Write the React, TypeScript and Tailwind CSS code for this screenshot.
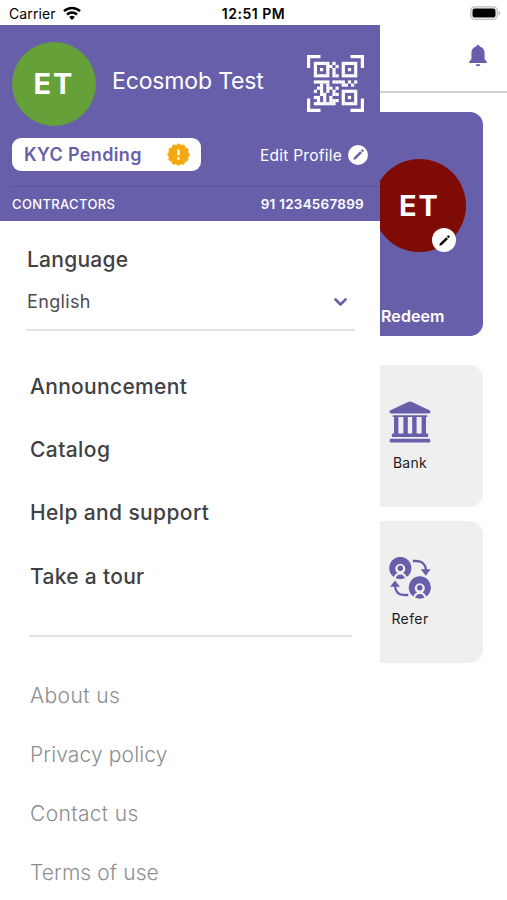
import { Fragment } from "react";

const menuLinks = [
  { label: "Announcement", className: "tracking-[0.32px]" },
  { label: "Catalog", className: "tracking-[0.4px]" },
  { label: "Help and support", className: "tracking-[0.38px]" },
  { label: "Take a tour", className: "tracking-[0.3px]" },
];

const infoLinks = [
  { label: "About us", className: "tracking-[0.4px]" },
  { label: "Privacy policy", className: "tracking-[0.13px]" },
  { label: "Contact us", className: "tracking-[0.35px]" },
  { label: "Terms of use", className: "tracking-[0.1px]" },
];

const qrRows = [
  "#####.#..#####",
  "#...##.#.#...#",
  "#.#.#.#..#.#.#",
  "#...#.#..#...#",
  "#####.##.#####",
  "..............",
  "#####.####.#.#",
  "..#.#....##.#.",
  ".##.##.#......",
  "#.#.#.#..#####",
  "..##..##.#...#",
  "##.#.#...#.#.#",
  ".#.#.###.#...#",
  "#######..#####",
];

function WifiIcon() {
  return (
    <svg className="ml-[7px] h-[15px] w-[18px]" viewBox="0 0 18 15" fill="none" stroke="#000" strokeWidth="2.5">
      <path d="M1 5.1a11.6 11.6 0 0 1 16 0" />
      <path d="M4 8.5a7.4 7.4 0 0 1 10 0" />
      <path d="M9 14 6.1 11.1a4.2 4.2 0 0 1 5.8 0Z" fill="#000" stroke="none" />
    </svg>
  );
}

function BatteryIcon() {
  return (
    <svg className="h-[15px] w-[31px]" viewBox="0 0 31 15">
      <rect x="0.8" y="0.8" width="26.4" height="12.6" rx="3.8" fill="#fff" stroke="#bbb" strokeWidth="1.3" />
      <rect x="2.5" y="2.6" width="23" height="9" rx="2.2" fill="#000" />
      <path d="M28.6 5c1.8.6 1.8 3.8 0 4.4Z" fill="#aaa" />
    </svg>
  );
}

function QrIcon() {
  return (
    <svg className="size-[57px]" viewBox="0 0 57 57">
      <path
        d="M1.6 13V1.6H13.5M43.5 1.6h11.9V13M55.4 43.5v11.9H43.5M13.5 55.4H1.6V43.5"
        fill="none"
        stroke="#fff"
        strokeWidth="3.2"
      />
      <g transform="translate(6.8 6.8) scale(3.1)" fill="#fff">
        {qrRows.map((row, y) => (
          <Fragment key={y}>
            {row.split("").map((cell, x) =>
              cell === "#" ? <rect key={x} x={x} y={y} width="1.03" height="1.03" /> : null
            )}
          </Fragment>
        ))}
      </g>
    </svg>
  );
}

function AlertBadge() {
  return (
    <svg className="size-[23px]" viewBox="0 0 24 24">
      <path
        d="M12 .8 14.6 2.6 17.8 2.2 19.1 5.1 22 6.5 21.6 9.6 23.3 12.2 21.6 14.8 21.8 18 18.9 19.3 17.5 22.1 14.4 21.7 12 23.4 9.4 21.7 6.2 22.1 4.9 19.2 2 17.8 2.4 14.7.7 12 2.4 9.5 2.1 6.3 5 5 6.5 2.1 9.6 2.5Z"
        fill="#f6a80f"
        stroke="#f6a80f"
        strokeWidth="1"
        strokeLinejoin="round"
      />
      <path d="M12 6.8v6" stroke="#fff" strokeWidth="2.4" />
      <path d="M12 14.9v2.5" stroke="#fff" strokeWidth="2.4" />
    </svg>
  );
}

function PencilIcon({ className }: { className: string }) {
  return (
    <svg className={className} viewBox="0 0 12 12" fill="currentColor">
      <path d="M1.3 10.8 1.7 8.7 7.6 2.9 9.2 4.5 3.3 10.3Z" />
      <path d="M8.2 2.3 9 1.5a1 1 0 0 1 1.4 0l.2.2a1 1 0 0 1 0 1.4l-.8.8Z" />
    </svg>
  );
}

function BellIcon() {
  return (
    <svg className="h-[23px] w-[20px]" viewBox="0 0 20 23" fill="#685faa">
      <path d="M10 .7c.9 0 1.5.6 1.5 1.5 3.3.8 5.1 3.4 5.1 6.8v5.6c0 1.7 2.4 2.5 2.4 3.8 0 .5-.3.7-.8.7H1.8c-.5 0-.8-.2-.8-.7 0-1.3 2.4-2.1 2.4-3.8V9c0-3.4 1.8-6 5.1-6.8C8.5 1.3 9.1.7 10 .7Z" />
      <path d="M7.6 20.3h4.8a2.4 2 0 0 1-4.8 0Z" />
    </svg>
  );
}

function BankIcon() {
  return (
    <svg className="size-[42px]" viewBox="0 0 42 42" fill="#685faa">
      <path d="M21 .5c.7 0 1.3.2 1.9.5L40.5 9.3c.7.4.9.8.9 1.5v.2c0 .9-.5 1.4-1.4 1.4H2c-.9 0-1.4-.5-1.4-1.4v-.2c0-.7.2-1.1.9-1.5L19.1 1C19.7.7 20.3.5 21 .5Z" />
      <path d="M3.8 14.2h34.4v1.8h-1.2v17h-4.4v-17h-5v17h-4.4v-17h-4.4v17h-4.4v-17H9.4v17H5v-17H3.8Z" />
      <rect x="2.8" y="32.6" width="36.4" height="3.4" rx="1" />
      <rect x="0.6" y="37.7" width="40.8" height="3.7" rx="1.5" />
    </svg>
  );
}

function ReferIcon() {
  return (
    <svg className="size-[42px]" viewBox="0 0 42 42" fill="none">
      <g id="person">
        <path d="M4.9 20a11.1 11.1 0 1 1 12.8 0c-.6-2-1.9-3.3-3.6-4a5 5 0 1 0-5.6 0c-1.7.7-3 2-3.6 4Z" fill="#685faa" />
        <circle cx="11.3" cy="11.3" r="2.7" fill="#685faa" />
        <path d="M6.7 21.3c.5-2.5 2.3-3.9 4.6-3.9s4.1 1.4 4.6 3.9c-2.7 1.1-6.5 1.1-9.2 0Z" fill="#685faa" />
      </g>
      <use href="#person" x="19.5" y="19.5" />
      <path d="M23.8 4h3.5c5.6 0 9.3 3.4 9.6 9" stroke="#685faa" strokeWidth="2.3" />
      <path d="M31.7 12.3h9.9l-4.7 6.5Z" fill="#685faa" />
      <path d="M19.3 38h-3.8c-5.7 0-9.2-3.3-9.5-9" stroke="#685faa" strokeWidth="2.3" />
      <path d="M1 29.8h10L6 23.4Z" fill="#685faa" />
    </svg>
  );
}

function StatusBar() {
  return (
    <div className="grid h-[25px] grid-cols-3 items-center bg-white pt-[2px] text-black">
      <div className="flex items-center pl-[9px] text-[14px] leading-none tracking-[0.1px]">
        Carrier
        <WifiIcon />
      </div>
      <p className="text-center text-[14px] leading-none font-semibold tracking-[0.5px]">12:51 PM</p>
      <div className="flex justify-end pr-[6px]">
        <BatteryIcon />
      </div>
    </div>
  );
}

function ProfileHeader() {
  return (
    <div className="h-[196px] shrink-0 bg-[#685faa] text-white">
      <div className="flex h-[113px] items-center pt-[4px] pr-[16px] pl-[12px]">
        <div className="flex size-[84px] items-center justify-center rounded-full bg-[#66a038] text-[29px] font-bold tracking-[2px]">
          ET
        </div>
        <p className="ml-[16px] flex-1 pb-[5px] text-[23px] tracking-[-0.15px] whitespace-nowrap">Ecosmob Test</p>
        <QrIcon />
      </div>
      <div className="flex h-[33px] items-center justify-between pr-[12px] pl-[12px]">
        <div className="flex h-[33px] w-[189px] items-center justify-between rounded-[9px] bg-white pr-[11px] pl-[12px] text-[18px] font-semibold tracking-[0.35px] text-[#685faa]">
          KYC Pending
          <AlertBadge />
        </div>
        <div className="flex items-center gap-[6px] text-[15.5px] tracking-[0.25px]">
          <span className="pt-[2px]">Edit Profile</span>
          <span className="flex size-[20px] items-center justify-center rounded-full bg-white text-[#685faa]">
            <PencilIcon className="size-[13px]" />
          </span>
        </div>
      </div>
      <div className="mt-[15px] ml-[12px] flex h-[36px] items-center justify-between border-t border-[#5b5299] pr-[16px]">
        <p className="text-[13px] font-medium tracking-[0.35px]">CONTRACTORS</p>
        <p className="text-[13.5px] font-semibold tracking-[0.25px]">91 1234567899</p>
      </div>
    </div>
  );
}

function Drawer() {
  return (
    <aside className="flex w-[380px] shrink-0 flex-col bg-white">
      <ProfileHeader />

      {/* Language */}
      <div className="mr-[25px] ml-[26px] h-[110px] shrink-0 border-b-2 border-[#e4e4e4] pt-[25px] pl-px">
        <p className="text-[21px] leading-[28px] font-medium tracking-[0.25px] text-[#414143]">Language</p>
        <div className="mt-[14px] flex items-center justify-between pr-[8px]">
          <p className="text-[18px] leading-[28px] tracking-[0.35px] text-[#4c4c4e]">English</p>
          <svg className="h-[9px] w-[13px]" viewBox="0 0 13 9" fill="none" stroke="#685faa" strokeWidth="2.6">
            <path d="M1.5 1.5 6.5 6.5l5-5" strokeLinecap="round" strokeLinejoin="round" />
          </svg>
        </div>
      </div>

      {/* Menu */}
      <ul className="mr-[28px] ml-[29px] h-[306px] shrink-0 border-b-2 border-[#e4e4e4] pt-[24px] pl-px">
        {menuLinks.map((link) => (
          <li key={link.label} className="flex h-[63.3px] items-center text-[21px] font-medium text-[#414143]">
            <span className={link.className}>{link.label}</span>
          </li>
        ))}
      </ul>

      <ul className="ml-[30px] shrink-0 pt-[29px]">
        {infoLinks.map((link) => (
          <li key={link.label} className="flex h-[59px] items-center text-[21px] font-light text-[#8e8e90]">
            <span className={link.className}>{link.label}</span>
          </li>
        ))}
      </ul>
    </aside>
  );
}

function HomeScreen() {
  return (
    <main className="min-w-0 flex-1 overflow-hidden bg-white">
      <div className="flex h-[68px] items-center justify-end border-b-2 border-[#d2d2d4] pr-[19px] pb-[6px]">
        <BellIcon />
      </div>

      <div className="mt-[19px] flex h-[224px] w-[103px] flex-col rounded-r-[13px] bg-[#685faa] text-white">
        <div className="relative mt-[47px] -ml-[7px] flex size-[93px] items-center justify-center rounded-full bg-[#7e0c05] text-[29px] font-bold tracking-[2px]">
          ET
          <span className="absolute right-[10px] bottom-0 flex size-[24px] items-center justify-center rounded-full bg-white text-black">
            <PencilIcon className="size-[13px]" />
          </span>
        </div>
        <p className="mt-[52px] pl-px text-[16px] leading-[24px] font-semibold tracking-[0.1px]">Redeem</p>
      </div>

      <div className="mt-[29px] -ml-[43px] flex h-[142px] w-[146px] flex-col items-center rounded-[14px] bg-[#efefef] pt-[36px] text-[14px] tracking-[0.3px] text-[#1c1c1e]">
        <BankIcon />
        <p className="mt-[9px]">Bank</p>
      </div>
      <div className="mt-[14px] -ml-[43px] flex h-[142px] w-[146px] flex-col items-center rounded-[14px] bg-[#efefef] pt-[36px] text-[14px] tracking-[0.4px] text-[#1c1c1e]">
        <ReferIcon />
        <p className="mt-[9px]">Refer</p>
      </div>
    </main>
  );
}

export default function App() {
  return (
    <div className="h-[900px] w-[507px] overflow-hidden bg-white font-['Inter',sans-serif]">
      <StatusBar />
      <div className="flex h-[875px]">
        <Drawer />
        <HomeScreen />
      </div>
    </div>
  );
}
